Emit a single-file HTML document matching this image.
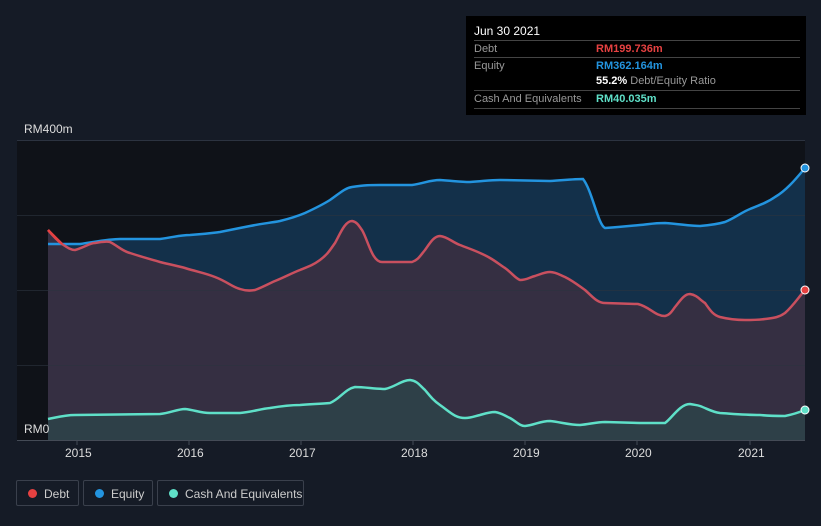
<!DOCTYPE html>
<html><head><style>
body{margin:0;width:821px;height:526px;background:#151b26;font-family:"Liberation Sans",sans-serif;overflow:hidden;position:relative}
.tt{position:absolute;left:466px;top:16px;width:340px;height:99px;background:#000;color:#fff;font-size:11px}
.row{position:absolute;left:8px;width:326px;border-top:1px solid #444;height:17px;line-height:17px}
.lab{color:#999}
.v{position:absolute;left:122px;top:0;font-weight:bold}
.lg{position:absolute;top:480px;height:26px;border:1px solid #3a404c;border-radius:2px;color:#ccc;font-size:12px;line-height:26px;box-sizing:border-box}
.lg i{position:absolute;left:11px;top:8px;width:9px;height:9px;border-radius:50%}
.lg span{position:absolute;left:27px}
.ax{position:absolute;color:#ddd;font-size:12px}
</style></head><body>
<svg width="821" height="526" style="position:absolute;left:0;top:0">
<rect x="17" y="140" width="788" height="300" fill="#0f1218"/>
<path d="M48,244 C60,244 70,244 80,244 C100,241 110,239 120,239 L160,239 C175,237 180,235 190,235 C205,234 212,233 220,232 C235,229 240,228 250,226 C265,223 270,223 280,221 C292,218 298,216 305,213 C318,207 322,205 330,200 C340,193 345,188 352,187 C365,185 370,185 380,185 L412,185 C425,183 430,180 440,180 C455,181 460,182 470,182 C485,181 490,180 500,180 L550,181 C565,180 575,179 583,179 C592,190 598,225 605,228 C620,227 630,226 640,225 C650,224 655,223 665,223 C680,224 690,226 700,226 C712,225 718,224 725,222 C735,218 742,212 750,209 C760,205 768,202 775,197 C782,193 786,189 790,185 C796,179 800,174 805,168 L805,440 L48,440Z" fill="#13304a"/>
<path d="M48,230 C54,237 58,241 62,244 C68,248 71,250 75,250 C85,247 90,243 95,243 C102,242 106,241 110,242 C118,246 122,251 130,253 C145,258 150,259 160,262 C172,265 178,266 185,268 C198,272 205,273 215,277 C228,282 232,287 240,289 C246,291 250,291 255,290 C263,287 268,284 275,281 C285,277 292,273 300,270 C310,266 313,265 320,260 C328,254 330,250 335,243 C340,234 345,221 352,221 C358,222 360,228 362,230 C368,240 372,262 382,262 L412,262 C418,260 420,256 425,250 C430,243 434,236 440,236 C448,237 452,242 460,245 C470,249 480,252 490,258 C497,262 500,265 505,268 C512,273 515,278 520,280 C527,280 530,277 535,276 C541,274 545,272 550,272 C556,272 560,275 565,277 C573,281 578,285 585,290 C592,296 597,303 605,303 L638,304 C650,307 655,316 665,316 C670,315 672,311 675,307 C680,301 684,294 690,294 C697,295 700,300 705,303 C710,310 713,315 720,317 C728,319 735,320 745,320 C752,320 758,320 765,319 C772,318 778,318 785,313 C793,306 798,298 805,290 L805,440 L48,440Z" fill="#352f42"/>
<path d="M48,419 C58,417 65,415 75,415 L160,414 C170,413 178,409 185,409 C195,410 200,413 210,413 L240,413 C252,412 260,409 270,408 C282,406 290,405 300,405 C312,404 320,404 330,403 C340,399 345,389 355,387 C365,387 375,389 385,389 C395,387 402,380 410,380 C418,381 420,386 425,390 C430,396 433,400 440,405 C450,412 455,418 465,418 C472,418 475,416 480,415 C487,413 490,412 495,412 C502,413 505,416 510,418 C517,422 520,426 525,426 C535,425 540,421 550,421 C560,422 570,425 580,425 C590,424 597,422 605,422 L640,423 L665,423 C672,418 680,404 690,404 C695,405 697,405 700,406 C708,409 712,412 720,413 C735,414 745,415 760,415 C770,416 778,416 785,416 C795,414 800,412 805,410 L805,440 L48,440Z" fill="#2e4048"/>
<g stroke="#2c3340" stroke-width="1">
<line x1="17" y1="140.5" x2="805" y2="140.5"/><line x1="17" y1="215.5" x2="805" y2="215.5" stroke-opacity=".6"/><line x1="17" y1="290.5" x2="805" y2="290.5" stroke-opacity=".6"/><line x1="17" y1="365.5" x2="805" y2="365.5" stroke-opacity=".6"/>
<line x1="17" y1="440.5" x2="805" y2="440.5" stroke="#444b56"/>
</g>
<g stroke="#444b56"><line x1="77" y1="440" x2="77" y2="445"/><line x1="189" y1="440" x2="189" y2="445"/><line x1="301" y1="440" x2="301" y2="445"/><line x1="413" y1="440" x2="413" y2="445"/><line x1="525" y1="440" x2="525" y2="445"/><line x1="637" y1="440" x2="637" y2="445"/><line x1="750" y1="440" x2="750" y2="445"/></g>
<path d="M48,244 C60,244 70,244 80,244 C100,241 110,239 120,239 L160,239 C175,237 180,235 190,235 C205,234 212,233 220,232 C235,229 240,228 250,226 C265,223 270,223 280,221 C292,218 298,216 305,213 C318,207 322,205 330,200 C340,193 345,188 352,187 C365,185 370,185 380,185 L412,185 C425,183 430,180 440,180 C455,181 460,182 470,182 C485,181 490,180 500,180 L550,181 C565,180 575,179 583,179 C592,190 598,225 605,228 C620,227 630,226 640,225 C650,224 655,223 665,223 C680,224 690,226 700,226 C712,225 718,224 725,222 C735,218 742,212 750,209 C760,205 768,202 775,197 C782,193 786,189 790,185 C796,179 800,174 805,168" fill="none" stroke="#2394df" stroke-width="2.5"/>
<path d="M48,230 C54,237 58,241 62,244 C68,248 71,250 75,250 C85,247 90,243 95,243 C102,242 106,241 110,242 C118,246 122,251 130,253 C145,258 150,259 160,262 C172,265 178,266 185,268 C198,272 205,273 215,277 C228,282 232,287 240,289 C246,291 250,291 255,290 C263,287 268,284 275,281 C285,277 292,273 300,270 C310,266 313,265 320,260 C328,254 330,250 335,243 C340,234 345,221 352,221 C358,222 360,228 362,230 C368,240 372,262 382,262 L412,262 C418,260 420,256 425,250 C430,243 434,236 440,236 C448,237 452,242 460,245 C470,249 480,252 490,258 C497,262 500,265 505,268 C512,273 515,278 520,280 C527,280 530,277 535,276 C541,274 545,272 550,272 C556,272 560,275 565,277 C573,281 578,285 585,290 C592,296 597,303 605,303 L638,304 C650,307 655,316 665,316 C670,315 672,311 675,307 C680,301 684,294 690,294 C697,295 700,300 705,303 C710,310 713,315 720,317 C728,319 735,320 745,320 C752,320 758,320 765,319 C772,318 778,318 785,313 C793,306 798,298 805,290" fill="none" stroke="#c9505f" stroke-width="2.5"/>
<path d="M48,230 L62,244" stroke="#e64141" stroke-width="2.5"/>
<path d="M48,419 C58,417 65,415 75,415 L160,414 C170,413 178,409 185,409 C195,410 200,413 210,413 L240,413 C252,412 260,409 270,408 C282,406 290,405 300,405 C312,404 320,404 330,403 C340,399 345,389 355,387 C365,387 375,389 385,389 C395,387 402,380 410,380 C418,381 420,386 425,390 C430,396 433,400 440,405 C450,412 455,418 465,418 C472,418 475,416 480,415 C487,413 490,412 495,412 C502,413 505,416 510,418 C517,422 520,426 525,426 C535,425 540,421 550,421 C560,422 570,425 580,425 C590,424 597,422 605,422 L640,423 L665,423 C672,418 680,404 690,404 C695,405 697,405 700,406 C708,409 712,412 720,413 C735,414 745,415 760,415 C770,416 778,416 785,416 C795,414 800,412 805,410" fill="none" stroke="#5fe0c8" stroke-width="2.5"/>
<circle cx="805" cy="168" r="4" fill="#2394df" stroke="#fff" stroke-width="1"/>
<circle cx="805" cy="290" r="4" fill="#e64141" stroke="#fff" stroke-width="1"/>
<circle cx="805" cy="410" r="4" fill="#5fe0c8" stroke="#fff" stroke-width="1"/>
</svg>
<div class="ax" style="left:24px;top:122px">RM400m</div>
<div class="ax" style="left:24px;top:422px">RM0</div>
<div class="ax" style="left:65px;top:446px">2015</div>
<div class="ax" style="left:177px;top:446px">2016</div>
<div class="ax" style="left:289px;top:446px">2017</div>
<div class="ax" style="left:401px;top:446px">2018</div>
<div class="ax" style="left:513px;top:446px">2019</div>
<div class="ax" style="left:625px;top:446px">2020</div>
<div class="ax" style="left:738px;top:446px">2021</div>
<div class="tt">
<div style="position:absolute;left:8px;top:8px;font-size:12px">Jun 30 2021</div>
<div class="row" style="top:24px"><span class="lab">Debt</span><span class="v" style="color:#e64141">RM199.736m</span></div>
<div class="row" style="top:41px"><span class="lab">Equity</span><span class="v" style="color:#2394df">RM362.164m</span></div>
<div class="row" style="top:57px;border-top:none"><span class="v">55.2% <span style="color:#999;font-weight:normal">Debt/Equity Ratio</span></span></div>
<div class="row" style="top:74px;border-bottom:1px solid #444"><span class="lab">Cash And Equivalents</span><span class="v" style="color:#5fe0c8">RM40.035m</span></div>
</div>
<div class="lg" style="left:16px;width:63px"><i style="background:#e64141"></i><span>Debt</span></div>
<div class="lg" style="left:83px;width:70px"><i style="background:#2394df"></i><span>Equity</span></div>
<div class="lg" style="left:157px;width:147px"><i style="background:#5fe0c8"></i><span>Cash And Equivalents</span></div>
</body></html>
